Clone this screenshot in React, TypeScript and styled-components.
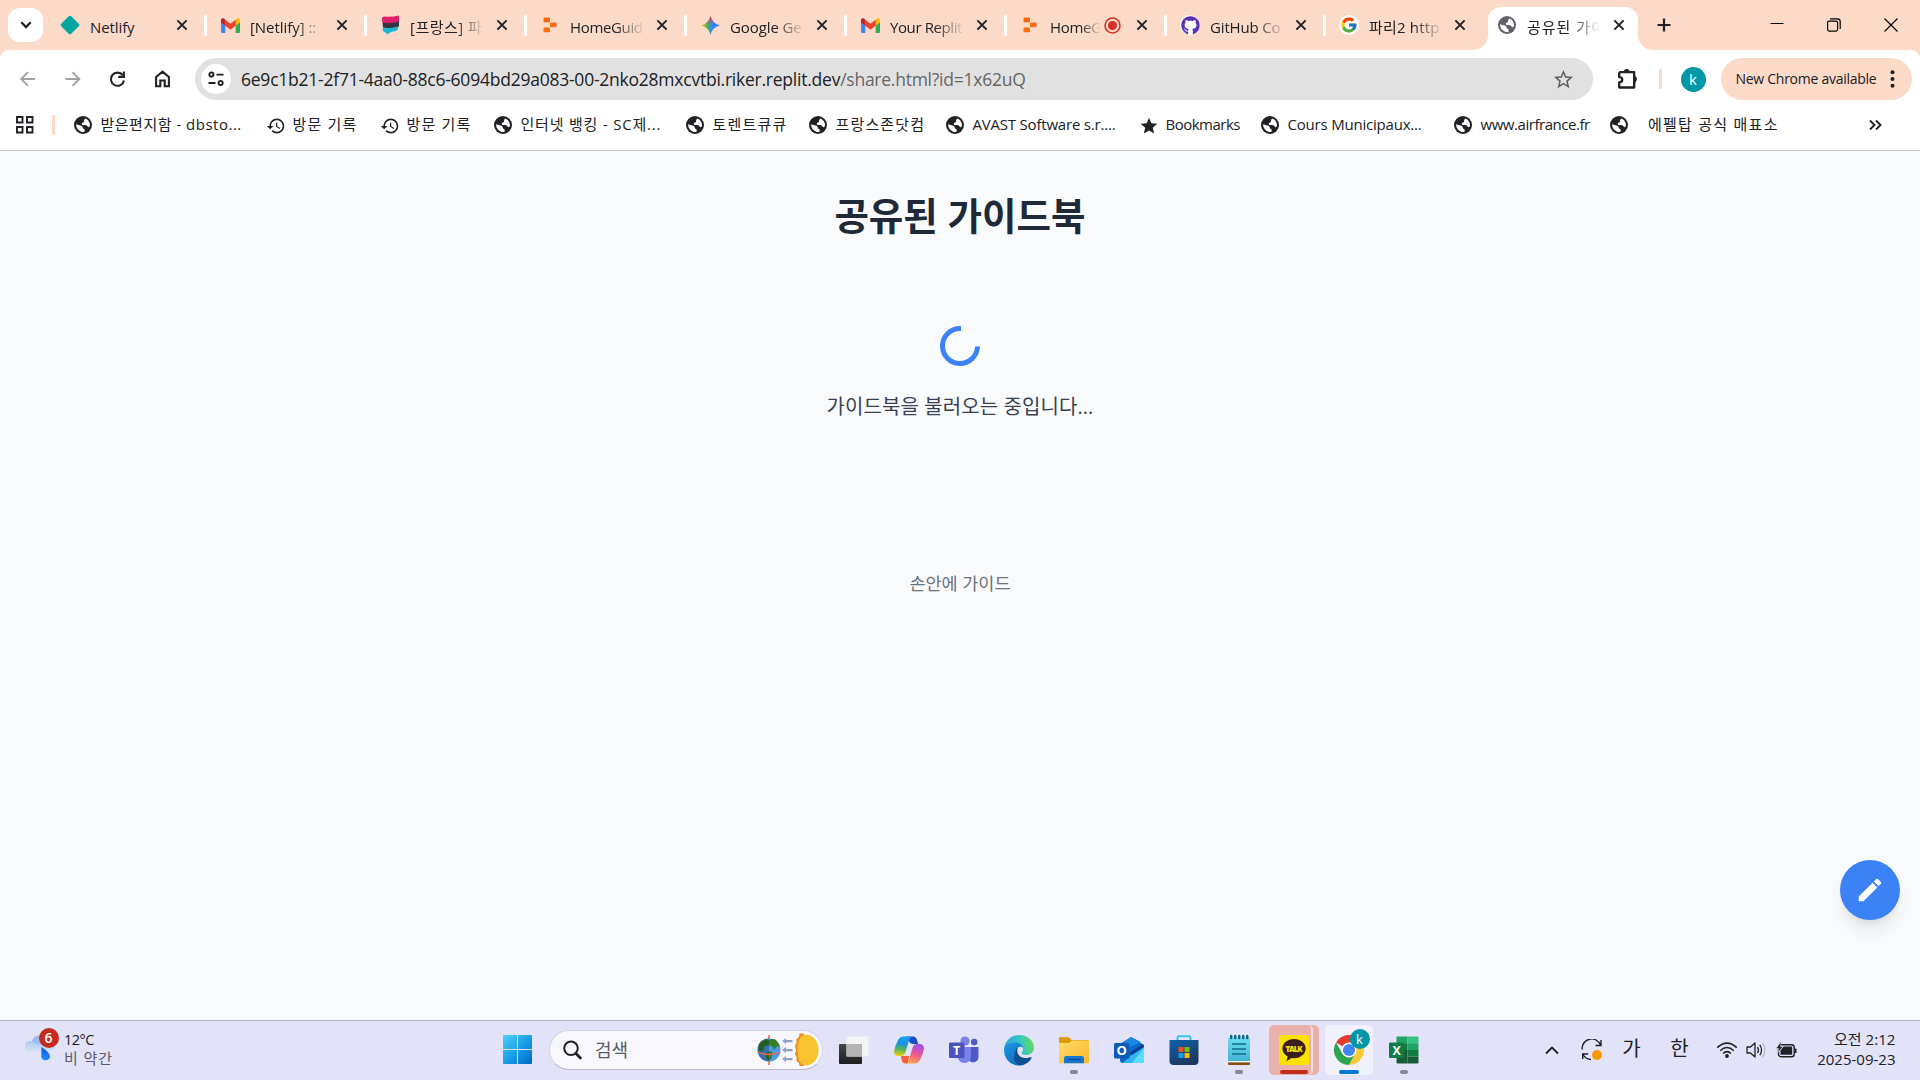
import React from 'react';
import styled, { createGlobalStyle } from 'styled-components';
import { MdHistory, MdStar, MdStarOutline, MdEdit } from 'react-icons/md';
import { FcGoogle } from 'react-icons/fc';
import { FaGithub } from 'react-icons/fa';

const uiFont = `"Open Sans", "Noto Sans CJK KR", sans-serif`;
const ink = '#202124';
const peach = '#fcdac8';

const GlobalStyle = createGlobalStyle`
  * { box-sizing: border-box; }
  body { margin: 0; font-family: ${uiFont}; color: ${ink}; overflow: hidden; }
  svg { display: block; flex: none; }
`;

const Screen = styled.div`
  width: 1920px;
  height: 1080px;
  display: flex;
  flex-direction: column;
  background: #f9fafc;
`;

const Label = styled.span<{ $size?: number; $track?: number; $color?: string; $lh?: number }>`
  font-size: ${(p) => p.$size ?? 15}px;
  letter-spacing: ${(p) => p.$track ?? 0}px;
  color: ${(p) => p.$color ?? ink};
  line-height: ${(p) => p.$lh ?? 20}px;
  white-space: pre;
`;

/* ---------- tab strip ---------- */

const TabStrip = styled.header`
  height: 50px;
  display: flex;
  background: ${peach};
`;

const TabSearch = styled.button`
  width: 35px;
  height: 34px;
  margin: 8px 4px 0 8px;
  padding: 0;
  border: 0;
  border-radius: 12px;
  background: #fff;
  display: grid;
  place-items: center;
  flex: none;
`;

const Tab = styled.div<{ $width: number }>`
  width: ${(p) => p.$width}px;
  height: 50px;
  padding-left: 12px;
  display: flex;
  align-items: center;
  flex: none;
`;

const ActiveTab = styled.div`
  width: 150px;
  height: 43px;
  margin: 7px 0 0 3px;
  padding: 0 0 7px 8px;
  display: flex;
  align-items: center;
  flex: none;
  position: relative;
  background: #fff;
  border-radius: 13px 13px 0 0;
  &::before,
  &::after {
    content: '';
    position: absolute;
    bottom: 0;
    width: 15px;
    height: 15px;
  }
  &::before {
    left: -15px;
    background: radial-gradient(circle at 0 0, ${peach} 14.5px, #fff 15.5px);
  }
  &::after {
    right: -15px;
    background: radial-gradient(circle at 100% 0, ${peach} 14.5px, #fff 15.5px);
  }
`;

const TabIcon = styled.span`
  width: 22px;
  height: 22px;
  display: grid;
  place-items: center;
  flex: none;
`;

const TabTitle = styled.div<{ $width: number; $track: number; $fade: boolean }>`
  width: ${(p) => p.$width}px;
  margin-left: 9px;
  padding-top: 4px;
  overflow: hidden;
  white-space: pre;
  font-size: 15px;
  line-height: 22px;
  letter-spacing: ${(p) => p.$track}px;
  flex: none;
  mask-image: ${(p) => (p.$fade ? 'linear-gradient(90deg, #000 60%, transparent 100%)' : 'none')};
`;

const CloseSlot = styled.span`
  margin-left: auto;
  width: 31px;
  height: 22px;
  display: flex;
  align-items: center;
  justify-content: space-between;
`;

const ActiveClose = styled.span`
  margin-left: auto;
  padding-right: 13px;
`;

const TabDivider = styled.i<{ $on: boolean }>`
  width: 3px;
  height: 21px;
  border-radius: 2px;
  background: ${(p) => (p.$on ? '#fff' : 'transparent')};
`;

const NewTab = styled.span`
  padding: 18px 0 0 19px;
`;

const WindowControls = styled.div`
  margin-left: auto;
  padding: 0 22px 1px 0;
  display: flex;
  align-items: center;
  gap: 43px;
`;

/* ---------- toolbar ---------- */

const ToolbarBack = styled.div`
  background: ${peach};
`;

const Toolbar = styled.div`
  height: 57px;
  padding: 1px 8px 0 17px;
  display: flex;
  align-items: center;
  background: #fff;
  border-radius: 9px 9px 0 0;
`;

const NavButtons = styled.nav`
  width: 178px;
  display: flex;
  gap: 23px;
`;

const Omnibox = styled.div`
  width: 1398px;
  height: 42px;
  padding: 0 18px 0 6px;
  display: flex;
  align-items: center;
  border-radius: 21px;
  background: #e1e1e1;
`;

const SiteInfo = styled.span`
  width: 30px;
  height: 30px;
  margin-right: 10px;
  border-radius: 50%;
  background: #fff;
  display: grid;
  place-items: center;
`;

const BookmarkStar = styled.span`
  margin-left: auto;
`;

const Divider = styled.i<{ $left: number; $right: number }>`
  width: 2.5px;
  height: 20px;
  margin: 0 ${(p) => p.$right}px 0 ${(p) => p.$left}px;
  border-radius: 1px;
  background: ${peach};
  flex: none;
`;

const Extensions = styled.span`
  margin-left: 24px;
`;

const Avatar = styled.span<{ $size: number; $font: number }>`
  width: ${(p) => p.$size}px;
  height: ${(p) => p.$size}px;
  border-radius: 50%;
  background: #0097a7;
  color: #fff;
  font-size: ${(p) => p.$font}px;
  line-height: 1;
  display: grid;
  place-items: center;
  flex: none;
`;

const UpdatePill = styled.button`
  width: 191px;
  height: 42px;
  margin-left: 15px;
  padding: 0 17px 0 15px;
  border: 0;
  border-radius: 21px;
  background: ${peach};
  font-family: inherit;
  display: flex;
  align-items: center;
  justify-content: space-between;
`;

/* ---------- bookmarks ---------- */

const BookmarkBar = styled.div`
  height: 44px;
  padding: 0 38px 8px 16px;
  display: flex;
  align-items: center;
  background: #fff;
  border-bottom: 1px solid #c8c8c8;
`;

const Bookmark = styled.a<{ $width: number; $gap: number }>`
  width: ${(p) => p.$width}px;
  display: flex;
  align-items: center;
  gap: ${(p) => p.$gap}px;
  flex: none;
  ${Label} {
    padding-bottom: 2px;
  }
`;

const BookmarkIcon = styled.span`
  width: 18px;
  height: 18px;
  display: grid;
  place-items: center;
  flex: none;
`;

const Overflow = styled.span`
  margin-left: auto;
`;

/* ---------- page ---------- */

const Page = styled.main`
  flex: 1;
  display: flex;
  flex-direction: column;
  align-items: center;
  background: #f9fafc;
`;

const Heading = styled.h1`
  margin: 40px 0 0;
  font-size: 37.5px;
  line-height: 50px;
  font-weight: 700;
  color: #1f2937;
`;

const Loading = styled.section`
  padding-top: 85px;
  display: flex;
  flex-direction: column;
  align-items: center;
  gap: 26px;
`;

const Footer = styled.footer`
  margin-top: 149px;
`;

const Fab = styled.button`
  width: 60px;
  height: 60px;
  margin: auto 20px 100px auto;
  padding: 0;
  border: 0;
  border-radius: 50%;
  background: #3b82f6;
  color: #fff;
  display: grid;
  place-items: center;
  box-shadow: 0 12px 19px -4px rgba(0, 0, 0, 0.1), 0 5px 8px -5px rgba(0, 0, 0, 0.1);
`;

/* ---------- taskbar ---------- */

const Taskbar = styled.footer`
  height: 60px;
  padding-bottom: 1px;
  display: flex;
  align-items: center;
  background: #e2e3f8;
  border-top: 1px solid #b3b4c5;
`;

const Weather = styled.div`
  width: 490px;
  height: 58px;
  padding-left: 25px;
  display: flex;
  align-items: center;
`;

const WeatherIcon = styled.span`
  position: relative;
  width: 39px;
  height: 36px;
`;

const Count = styled.b`
  position: absolute;
  left: 13.5px;
  top: -4px;
  width: 20px;
  height: 20px;
  border-radius: 50%;
  background: #c42b1c;
  color: #fff;
  font-size: 14px;
  font-weight: 600;
  line-height: 20px;
  text-align: center;
`;

const Stack = styled.div<{ $align: string }>`
  padding-bottom: 2px;
  display: flex;
  flex-direction: column;
  align-items: ${(p) => p.$align};
`;

const Start = styled.span`
  width: 59px;
  padding-left: 13px;
`;

const Search = styled.div`
  width: 274px;
  height: 40px;
  margin-right: 3px;
  padding: 0 2px 0 13px;
  display: flex;
  align-items: center;
  gap: 13px;
  border: 1px solid #d2d2e6;
  border-bottom-color: #babace;
  border-radius: 20px;
  background: #f7f7fd;
`;

const Highlight = styled.span`
  margin-left: auto;
`;

const Slot = styled.div`
  width: 55px;
  display: flex;
  justify-content: center;
`;

const Tile = styled.div<{ $width: number; $bg: string; $stacked?: boolean }>`
  position: relative;
  width: ${(p) => p.$width}px;
  height: 50px;
  padding-top: 9px;
  display: flex;
  flex-direction: column;
  align-items: center;
  gap: 4px;
  border-radius: 5px;
  background: ${(p) => p.$bg};
  &::after {
    content: '';
    display: ${(p) => (p.$stacked ? 'block' : 'none')};
    position: absolute;
    top: 0;
    right: 6px;
    width: 8px;
    height: 50px;
    border-right: 2px solid #f5dfe4;
    border-radius: 0 5px 5px 0;
  }
`;

const Indicator = styled.i<{ $width: number; $color: string }>`
  width: ${(p) => p.$width}px;
  height: 4px;
  border-radius: 2px;
  background: ${(p) => p.$color};
`;

const ProfileBadge = styled.span`
  position: absolute;
  right: 3px;
  top: 4px;
`;

const Tray = styled.div`
  margin-left: auto;
  padding-right: 24.5px;
  display: flex;
  align-items: center;
`;

const TrayItem = styled.span<{ $width: number }>`
  width: ${(p) => p.$width}px;
  flex: none;
`;

/* ---------- drawings ---------- */

const Globe = ({ color = ink }: { color?: string }) => (
  <svg width="18" height="18" viewBox="0 0 18 18">
    <circle cx="9" cy="9" r="9" fill={color} />
    <path d="M2 8.300 6.500 9.600Q8.500 9.800 8.700 11.500T10.600 13.300V15.700Q9 16.300 7.200 15.800 2.300 14 2 8.300z" fill="#fff" />
    <path d="M11.200 2.500Q15.800 4.300 16.100 9.300 15.500 11.700 14 11 13 9 11 9H8.600Q7.300 8.300 8 6.900L10 6Q9.700 3.500 11.200 2.500z" fill="#fff" />
  </svg>
);

const CloseX = () => (
  <svg width="12" height="12" viewBox="0 0 12 12" stroke={ink} strokeWidth="2" fill="none">
    <path d="M1.4 1.4 10.6 10.6M10.6 1.4 1.4 10.6" />
  </svg>
);

const Gmail = () => (
  <svg width="19" height="15" viewBox="0 0 19 15">
    <path d="M0 3h4.3v12H1.3A1.3 1.3 0 0 1 0 13.700z" fill="#4285f4" />
    <path d="M14.700 3H19v10.700a1.300 1.300 0 0 1-1.300 1.300h-3z" fill="#34a853" />
    <path d="M14.700 1.800 16.100.6C17.300-.4 19 .4 19 2v2.500l-4.300 3.300z" fill="#fbbc04" />
    <path d="M4.300 7.800V1.800l5.200 4 5.200-4v6L9.500 11.700z" fill="#ea4335" />
    <path d="M0 2C0 .4 1.700-.4 2.900.6l1.400 1.200v6L0 4.500z" fill="#c5221f" />
  </svg>
);

const Netlify = () => (
  <svg width="20" height="20" viewBox="0 0 20 20">
    <path d="M9 1.100a1.500 1.500 0 0 1 2 0l8 7.900a1.500 1.500 0 0 1 0 2l-8 7.900a1.500 1.500 0 0 1-2 0l-8-7.900a1.500 1.500 0 0 1 0-2z" fill="#05a6a0" />
  </svg>
);

const FlagIcon = () => (
  <svg width="19" height="20" viewBox="0 0 19 20">
    <path d="M1 4Q1 1.500 4 1.600 11 2 18 .5V7Q10 9.500 1.500 8z" fill="#dd1f6c" />
    <path d="M1.500 7.500Q10 9 18 6.500v5Q10 14.500 2 12.500z" fill="#33343f" />
    <path d="M1.500 12.500Q10 14 17.500 11.500L17 14q-1 2-5 2.500-3 .5-6 3-.5-2-2.500-2.500T1.500 12.500z" fill="#1bb5d8" />
  </svg>
);

const Replit = () => (
  <svg width="14" height="16" viewBox="0 0 14 16" fill="#fd6a0a">
    <rect x="0.500" y="0.500" width="6.500" height="4.800" rx="1" />
    <rect x="7" y="5.500" width="6.500" height="4.800" rx="1" />
    <rect x="0.500" y="10.500" width="6.500" height="4.800" rx="1" />
  </svg>
);

const Gemini = () => (
  <svg width="19" height="19" viewBox="0 0 19 19">
    <defs>
      <linearGradient id="gemA" x1="0" y1="0.500" x2="1" y2="0.500">
        <stop offset="0.050" stopColor="#f6c21c" />
        <stop offset="0.350" stopColor="#4aae62" />
        <stop offset="0.600" stopColor="#3186ff" />
      </linearGradient>
      <linearGradient id="gemB" x1="0.500" y1="0" x2="0.500" y2="1">
        <stop offset="0.050" stopColor="#f0454c" />
        <stop offset="0.450" stopColor="#f0454c" stopOpacity="0" />
      </linearGradient>
    </defs>
    <path d="M9.500 0Q11.300 7.700 19 9.500 11.300 11.300 9.500 19 7.700 11.300 0 9.500 7.700 7.700 9.500 0z" fill="url(#gemA)" />
    <path d="M9.500 0Q11.300 7.700 19 9.500 11.300 11.300 9.500 19 7.700 11.300 0 9.500 7.700 7.700 9.500 0z" fill="url(#gemB)" />
  </svg>
);

const Recording = () => (
  <svg width="17" height="17" viewBox="0 0 17 17">
    <circle cx="8.500" cy="8.500" r="7.500" fill="none" stroke="#d93025" strokeWidth="1.600" />
    <circle cx="8.500" cy="8.500" r="4.500" fill="#d93025" />
  </svg>
);

const WhiteDisc = styled.span`
  width: 20px;
  height: 20px;
  border-radius: 50%;
  background: #fff;
  display: grid;
  place-items: center;
`;

const Back = () => (
  <svg width="22" height="22" viewBox="0 0 22 22" fill="none" stroke="#a2a2a2" strokeWidth="1.900">
    <path d="M18 11H4.500M11 4.200 4.200 11l6.800 6.800" />
  </svg>
);
const Forward = () => (
  <svg width="22" height="22" viewBox="0 0 22 22" fill="none" stroke="#a2a2a2" strokeWidth="1.900">
    <path d="M3.500 11H17M10.500 4.200l6.800 6.800-6.800 6.800" />
  </svg>
);
const Reload = () => (
  <svg width="22" height="22" viewBox="0 0 22 22" fill="none" stroke={ink} strokeWidth="2.100">
    <path d="M17 12.500A6.600 6.600 0 1 1 15.800 7.200M16.900 3.500v5.400h-5.600" />
  </svg>
);
const Home = () => (
  <svg width="22" height="22" viewBox="0 0 22 22" fill="none" stroke={ink} strokeWidth="2.100">
    <path d="M4.100 9 10.500 3.700 16.900 9v9.300h-4.200v-5.800H8.300v5.800H4.100z" />
  </svg>
);

const Tune = () => (
  <svg width="18" height="16" viewBox="0 0 18 16" fill="none" stroke={ink} strokeWidth="1.900">
    <circle cx="4.400" cy="3.600" r="2.100" />
    <path d="M9.500 3.600h7M1.500 12h7" />
    <circle cx="13.600" cy="12" r="2.100" />
  </svg>
);

const Puzzle = () => (
  <svg width="22" height="22" viewBox="0 0 22 22">
    <path d="M2.200 4.200h15v5.200M17.200 12.500v7h-15v-5.200q3 0 3-2.600t-3-2.600V4.200" fill="none" stroke={ink} strokeWidth="2.300" strokeLinejoin="round" />
    <path d="M6.800 4a2.900 2.900 0 0 1 5.800 0zM17 8.200a2.900 2.900 0 0 1 0 5.800z" fill={ink} />
    <path d="M17.200 8v7" stroke={ink} strokeWidth="2.300" />
  </svg>
);

const AppsGrid = () => (
  <svg width="18" height="18" viewBox="0 0 18 18" fill="none" stroke={ink} strokeWidth="1.900">
    <path d="M1 1h5.500v5.500H1zM11 1h5.500v5.500H11zM1 11h5.500v5.500H1zM11 11h5.500v5.500H11z" />
  </svg>
);

const Spinner = () => (
  <svg width="40" height="40" viewBox="0 0 40 40" fill="none" stroke="#3b82f6" strokeWidth="5">
    <path d="M21 2.500H20A17.500 17.500 0 1 0 37.500 20.500" />
  </svg>
);

const Cloud = () => (
  <svg width="32" height="32" viewBox="0 0 32 32">
    <defs>
      <linearGradient id="cloudG" x1="0" y1="0" x2="0" y2="1">
        <stop offset="0" stopColor="#8fb4f0" />
        <stop offset="1" stopColor="#bcd4f7" />
      </linearGradient>
      <linearGradient id="cloudF" x1="0" y1="0" x2="0" y2="1">
        <stop offset="0" stopColor="#a9c6f3" />
        <stop offset="1" stopColor="#d6e6fb" />
      </linearGradient>
      <linearGradient id="dropG" x1="0" y1="0" x2="0" y2="1">
        <stop offset="0" stopColor="#1558d6" />
        <stop offset="1" stopColor="#1f8bff" />
      </linearGradient>
    </defs>
    <path d="M6 20a6 6 0 0 1 .5-9.500A8.500 8.500 0 0 1 21 6a7 7 0 0 1 9 8 6 6 0 0 1-5 6z" fill="url(#cloudG)" />
    <path d="M5.500 20A5.500 5.500 0 1 1 9 11q4 3 10 1.500 7-2 11 1.500Q30 20 24.500 20z" fill="url(#cloudF)" />
    <path d="M16.500 15q8.500 5.500 8.500 9.500a4.400 4.400 0 0 1-8.700 0z" fill="url(#dropG)" />
  </svg>
);

const Windows = () => (
  <svg width="30" height="30" viewBox="0 0 30 30">
    <defs>
      <linearGradient id="winG" x1="0" y1="0" x2="1" y2="1">
        <stop offset="0" stopColor="#4ed0fb" />
        <stop offset="0.500" stopColor="#1a9fe8" />
        <stop offset="1" stopColor="#0067c6" />
      </linearGradient>
    </defs>
    <path d="M1 0h13v14H0V1a1 1 0 0 1 1-1zM15 0h13a1 1 0 0 1 1 1v13H15zM0 15h14v14H1a1 1 0 0 1-1-1zM15 15h14v13a1 1 0 0 1-1 1H15z" fill="url(#winG)" />
  </svg>
);

const Magnifier = () => (
  <svg width="19" height="20" viewBox="0 0 19 20" fill="none" stroke={ink}>
    <circle cx="8" cy="8.300" r="6.800" strokeWidth="2" />
    <path d="M12.800 13.200 17.400 18" strokeWidth="2.700" strokeLinecap="round" />
  </svg>
);

const EquinoxArt = () => (
  <svg width="66" height="36" viewBox="0 0 66 36">
    <path d="M15 3v5M15 28v5" stroke="#f4654a" strokeWidth="1.600" />
    <circle cx="15" cy="18" r="11.500" fill="#4b9be8" />
    <path d="M5 12q3-4 7-5l3 2-1 4-4 2v3l-4 2q-2-4-1-8zM15 8q4-2 7 0 3 3 4 7l-3-1-3 4-2-4-4-1zM12 21l4-2 3 2-2 6-3 2-2-4z" fill="#357e21" />
    <path d="M15 6.500a11.500 11.500 0 0 0 0 23z" fill="#0a2233" opacity="0.350" />
    <path d="M3.800 20q11 5 22.400 0" fill="none" stroke="#f4654a" strokeWidth="1.300" />
    <path d="M28 9l4-3v2h6.500v2.300H32V12zM28 18l4-3v2h6.500v2.300H32V21zM28 27l4-3v2h6.500v2.300H32V30z" fill="#8ba4c4" />
    <path d="M50 1.500h-4.500L45 5l-2.500 2v4L41 14l1 4-1 4 1.500 3v4l2.500 2 .500 3H50z" fill="#ef8a1e" />
    <path d="M52 2.500q12 1.500 12.500 15.500Q64 32 52 33.500q-5 0-7-5-3-10 0-20 2-6 7-6z" fill="#f8c32e" />
  </svg>
);

const TaskView = () => (
  <svg width="32" height="32" viewBox="0 0 32 32">
    <defs>
      <linearGradient id="tvG" x1="0" y1="0" x2="0" y2="1">
        <stop offset="0" stopColor="#454545" />
        <stop offset="1" stopColor="#1e1e1e" />
      </linearGradient>
    </defs>
    <rect x="1" y="10" width="23" height="20" rx="1" fill="url(#tvG)" />
    <rect x="8.500" y="2.500" width="22" height="20" rx="1" fill="#f4f4f4" />
    <rect x="8.500" y="10" width="15.500" height="12.500" fill="#b4b4b4" />
  </svg>
);

const Copilot = () => (
  <svg width="32" height="32" viewBox="-1 -2.500 32 32">
    <defs>
      <linearGradient id="cpL" x1="0.400" y1="0" x2="0.300" y2="1">
        <stop offset="0" stopColor="#18a5f2" />
        <stop offset="0.350" stopColor="#1c8fe0" />
        <stop offset="0.650" stopColor="#4fb45c" />
        <stop offset="1" stopColor="#f3d00d" />
      </linearGradient>
      <linearGradient id="cpR" x1="0.700" y1="0" x2="0.400" y2="1">
        <stop offset="0" stopColor="#9a55ee" />
        <stop offset="0.450" stopColor="#e8509c" />
        <stop offset="1" stopColor="#fda04c" />
      </linearGradient>
    </defs>
    <path d="M7 19.500h8l-1 7.500H11.500q-3 0-3.800-3.500z" fill="#f2603b" />
    <path d="M12 0h7q3 0 4 3.500l1.200 4H19q-3 0-4-3z" fill="#1750c4" />
    <path d="M9.500 0H19q-3 .5-4 4l-3.500 11.500Q10.300 19.500 7 19.500H4.500Q0 19.300 0 15 1 9.500 3.800 4 5.600 0 9.500 0z" fill="url(#cpL)" />
    <path d="M20.500 27H11q3-.5 4-4l3.500-11.500Q19.700 7.500 23 7.500h2.500Q30 7.700 30 12q-1 5.500-3.800 11-1.800 4-5.700 4z" fill="url(#cpR)" />
  </svg>
);

const appFont = `"Open Sans", sans-serif`;

const Teams = () => (
  <svg width="32" height="32" viewBox="0 0 32 32">
    <circle cx="17" cy="7" r="4.600" fill="#7b83eb" />
    <circle cx="26.200" cy="8" r="3.200" fill="#5059c9" />
    <path d="M20 13h10.500v9a5.300 5.300 0 0 1-10.500 2z" fill="#5059c9" />
    <path d="M10 13h13v9q0 7-6.500 7T10 22z" fill="#7b83eb" />
    <rect x="1" y="8.500" width="15.500" height="15.500" rx="1.200" fill="#4b53bc" />
    <text x="8.700" y="20.700" fill="#fff" fontSize="12.500" fontWeight="700" fontFamily={appFont} textAnchor="middle">T</text>
  </svg>
);

const Edge = () => (
  <svg width="32" height="32" viewBox="0 0 32 32">
    <defs>
      <linearGradient id="edA" x1="0" y1="0.500" x2="1" y2="0.300">
        <stop offset="0" stopColor="#2aa6dc" />
        <stop offset="0.550" stopColor="#35c5c6" />
        <stop offset="1" stopColor="#69dd4c" />
      </linearGradient>
      <linearGradient id="edB" x1="0" y1="0" x2="1" y2="1">
        <stop offset="0" stopColor="#1b9be6" />
        <stop offset="1" stopColor="#0f57a8" />
      </linearGradient>
    </defs>
    <path d="M1 16A15 15 0 0 1 16 1c9 0 15 6 15 12.500 0 5-4 7.500-8 7.500-3 0-4.500-1-4.500-2 0-.8 1.500-1.500 1.500-3.500 0-3-3-5-7-5-7 0-12 4-12 5.500z" fill="url(#edA)" />
    <path d="M1 16C1 12 6 8.500 12 8.500c4 0 7 2 8 5-3-2-8-.5-8 4.500 0 6 6 9.500 12 8.500l4.500-1.700A15 15 0 0 1 1 16z" fill="url(#edB)" />
    <path d="M12 18c0-3 1.500-4.600 3.500-5-3 4-.500 10.500 6.500 11 3.500.200 6-1.500 6.500-1 .800.700-3.500 8-12.500 8C11 29 9.500 22 12 18z" fill="#124f91" />
  </svg>
);

const Explorer = () => (
  <svg width="32" height="32" viewBox="0 0 32 32">
    <defs>
      <linearGradient id="exG" x1="0" y1="0" x2="1" y2="1">
        <stop offset="0" stopColor="#ffdb6b" />
        <stop offset="1" stopColor="#fcb92a" />
      </linearGradient>
    </defs>
    <path d="M1 4a1 1 0 0 1 1-1h8.500l3 3H30a1 1 0 0 1 1 1v6H1z" fill="#dd9b07" />
    <path d="M1 9h10l3-2.500h16a1 1 0 0 1 1 1V28a1.300 1.300 0 0 1-1.300 1.300H2.300A1.300 1.300 0 0 1 1 28z" fill="url(#exG)" />
    <path d="M6 29.300v-5q0-2.300 2.300-2.300h15.400Q26 22 26 24.300v5z" fill="#1478cf" />
    <path d="M9.500 25.500h13" stroke="#0a4c92" strokeWidth="1.300" />
  </svg>
);

const Outlook = () => (
  <svg width="32" height="32" viewBox="0 0 32 32">
    <path d="M7 12 18 3l13 8v15q0 3-3 3H10q-3 0-3-3z" fill="#1068c4" />
    <path d="M18 3 8 9v8l20-9z" fill="#1b86dc" />
    <path d="M31 12v14q0 3-3 3H10l6-6z" fill="#2fb6f2" />
    <path d="M31 14v12q0 3-3 3h-9z" fill="#5ddcff" />
    <path d="m16 19 14-9 1 3-12 8z" fill="#0c3f94" />
    <rect x="1" y="9" width="15.500" height="15.500" rx="1.500" fill="#0c5cbd" />
    <text x="8.700" y="21.300" fill="#fff" fontSize="13" fontWeight="700" fontFamily={appFont} textAnchor="middle">O</text>
  </svg>
);

const Store = () => (
  <svg width="32" height="32" viewBox="0 0 32 32">
    <defs>
      <linearGradient id="stG" x1="0" y1="0" x2="0.500" y2="1">
        <stop offset="0" stopColor="#0d62ae" />
        <stop offset="1" stopColor="#20375f" />
      </linearGradient>
    </defs>
    <path d="M9.500 8V4Q9.500 2.300 11.200 2.300h9.600q1.700 0 1.700 1.700v4" fill="none" stroke="#36c2f5" strokeWidth="2" />
    <path d="M1.500 6h29v21a4 4 0 0 1-4 4h-21a4 4 0 0 1-4-4z" fill="url(#stG)" />
    <path d="M10.500 13H15.500v5h-5z" fill="#f25022" />
    <path d="M16.500 13h5v5h-5z" fill="#7fba00" />
    <path d="M10.500 19h5v5h-5z" fill="#00a4ef" />
    <path d="M16.500 19h5v5h-5z" fill="#ffb900" />
  </svg>
);

const Notepad = () => (
  <svg width="32" height="32" viewBox="0 0 32 32">
    <defs>
      <linearGradient id="npG" x1="0" y1="0" x2="0" y2="1">
        <stop offset="0" stopColor="#6fdcf0" />
        <stop offset="1" stopColor="#3fb2d4" />
      </linearGradient>
    </defs>
    <rect x="5" y="3.500" width="22" height="25" rx="1.500" fill="url(#npG)" />
    <path d="M5 27h22v1.500H5z" fill="#fff" />
    <path d="M5 28.500h22V30q0 1-1 1H6q-1 0-1-1z" fill="#8a4a12" />
    <path d="M9 10h14M9 15h14M9 20h14" stroke="#0e6b86" strokeWidth="1.700" />
    <path d="M8.200 2v2M12.200 2v2M16.200 2v2M20.200 2v2M24.200 2v2" stroke="#0e6b86" strokeWidth="2.500" strokeLinecap="round" />
  </svg>
);

const KakaoTalk = () => (
  <svg width="32" height="32" viewBox="0 0 32 32">
    <rect x="1" y="1" width="30" height="30" rx="3" fill="#fae100" />
    <path d="M16 5c6.600 0 11.700 4.300 11.700 9.600S22.600 24.300 16 24.300l-2.500-.2-5 3.200 1.100-4.800q-5.200-2.800-5.200-7.900C4.400 9.300 9.400 5 16 5z" fill="#3b1e1e" />
    <text x="16" y="17.800" fill="#fae100" fontSize="7.800" fontWeight="800" fontFamily={appFont} textAnchor="middle" textLength="17">TALK</text>
  </svg>
);

const Chrome = () => (
  <svg width="32" height="32" viewBox="0 0 32 32">
    <path d="M16 16 3 8.500A15 15 0 0 1 29 8.500H16z" fill="#e33b2e" />
    <path d="M3 8.500A15 15 0 0 0 16 31l6.500-11.200L16 16 9.500 19.800z" fill="#2da44e" />
    <path d="M29 8.500A15 15 0 0 1 16 31l6.500-11.200q2-5.300-2.500-11.300z" fill="#fcc934" />
    <circle cx="16" cy="16" r="7.600" fill="#fff" />
    <circle cx="16" cy="16" r="6" fill="#4285f4" />
  </svg>
);

const Excel = () => (
  <svg width="32" height="32" viewBox="0 0 32 32">
    <path d="M8.500 2.500h11v6.700h-11z" fill="#21a366" />
    <path d="M19.500 2.500h9.700q1.300 0 1.300 1.300v5.400h-11z" fill="#33c481" />
    <path d="M8.500 9.200h11v7h-11z" fill="#107c41" />
    <path d="M19.500 9.200h11v7h-11z" fill="#21a366" />
    <path d="M8.500 16h11v13.500H9.800q-1.300 0-1.300-1.300z" fill="#185c37" />
    <path d="M19.500 16h11v6.700h-11z" fill="#107c41" />
    <path d="M19.500 22.700h11v5.500q0 1.300-1.300 1.300h-9.700z" fill="#185c37" />
    <rect x="1" y="8.500" width="15.500" height="15.500" rx="1.200" fill="#107c41" />
    <text x="8.700" y="20.900" fill="#fff" fontSize="12.500" fontWeight="700" fontFamily={appFont} textAnchor="middle">X</text>
  </svg>
);

const Sync = () => (
  <svg width="22" height="22" viewBox="0 0 22 22" fill="none" stroke={ink} strokeWidth="1.400">
    <path d="M1.200 10.500A9.500 9.500 0 0 1 19.500 6M20 1v5.500h-5.500M1.700 20v-5h5.500M2 15.500q3 5 8 5" />
    <circle cx="16" cy="16" r="5" fill="#ff9500" stroke="none" />
  </svg>
);

const Wifi = () => (
  <svg width="22" height="18" viewBox="0 0 22 18" fill="none" stroke={ink} strokeWidth="1.500">
    <path d="M1.200 6.600q9.800-9 19.600 0M4.200 9.700q6.800-6.300 13.600 0M7 12.500q4-3.700 8 0" />
    <circle cx="11" cy="15" r="1.900" fill={ink} stroke="none" />
  </svg>
);

const Speaker = () => (
  <svg width="21" height="18" viewBox="0 0 21 18" fill="none" stroke={ink} strokeWidth="1.300">
    <path d="M1 6h3.500L9 2v14l-4.500-4H1z" strokeLinejoin="round" />
    <path d="M11.500 6q2 3 0 6M13.800 3.800q3.500 5.200 0 10.400" />
    <path d="M16.500 2q5 7 0 14" stroke="#b9bacb" />
  </svg>
);

const Battery = () => (
  <svg width="22" height="18" viewBox="0 0 22 18">
    <rect x="2.500" y="3.700" width="15.700" height="12" rx="2.500" fill="none" stroke={ink} strokeWidth="1.400" />
    <path d="M4.500 13.800V9.500L7.500 5.600h8.700v8.200z" fill={ink} />
    <path d="M18.700 7.500h1.800v4.500h-1.800z" fill={ink} />
    <path d="M5.500 0 0 7.500h2.800L1.500 12 7 5.500H4.500z" fill={ink} stroke="#e2e3f8" strokeWidth="0.600" />
  </svg>
);

/* ---------- data ---------- */

type TabInfo = { title: string; icon: React.ReactNode; track: number; width?: number; short?: boolean };

const tabs: TabInfo[] = [
  { title: 'Netlify', icon: <Netlify />, track: -0.1 },
  { title: '[Netlify] ::', icon: <Gmail />, track: -0.05 },
  { title: '[프랑스] 파', icon: <FlagIcon />, track: 0.5 },
  { title: 'HomeGuid', icon: <Replit />, track: -0.35 },
  { title: 'Google Ge', icon: <Gemini />, track: -0.1 },
  { title: 'Your Replit', icon: <Gmail />, track: -0.4 },
  { title: 'HomeG', icon: <Replit />, track: -0.35, short: true },
  { title: 'GitHub Co', icon: <WhiteDisc><FaGithub size={19} color="#5a32b4" /></WhiteDisc>, track: -0.15, width: 159 },
  { title: '파리2 http', icon: <WhiteDisc><FcGoogle size={18} /></WhiteDisc>, track: 0.2, width: 159 },
];

type Mark = { text: string; kind: 'globe' | 'history' | 'star'; width: number; track: number; gap?: number };

const marks: Mark[] = [
  { text: '받은편지함 - dbsto...', kind: 'globe', width: 192, track: 0.5 },
  { text: '방문 기록', kind: 'history', width: 114, track: 1.15 },
  { text: '방문 기록', kind: 'history', width: 114, track: 1.15 },
  { text: '인터넷 뱅킹 - SC제...', kind: 'globe', width: 192, track: 0.8 },
  { text: '토렌트큐큐', kind: 'globe', width: 123, track: 1.2 },
  { text: '프랑스존닷컴', kind: 'globe', width: 137, track: 1.15 },
  { text: 'AVAST Software s.r....', kind: 'globe', width: 193, track: -0.2 },
  { text: 'Bookmarks', kind: 'star', width: 122, track: -0.5 },
  { text: 'Cours Municipaux...', kind: 'globe', width: 193, track: -0.2 },
  { text: 'www.airfrance.fr', kind: 'globe', width: 156, track: -0.45 },
  { text: '에펠탑 공식 매표소', kind: 'globe', width: 180, track: 1.25, gap: 20.5 },
];

const markIcon = {
  globe: <Globe />,
  history: <MdHistory size={20} />,
  star: <MdStar size={20} />,
};

type AppInfo = { icon: React.ReactNode; dot?: [number, string]; tile?: [number, string]; stacked?: boolean; badge?: boolean };

const apps: AppInfo[] = [
  { icon: <TaskView /> },
  { icon: <Copilot /> },
  { icon: <Teams /> },
  { icon: <Edge /> },
  { icon: <Explorer />, dot: [8, '#85868f'] },
  { icon: <Outlook /> },
  { icon: <Store /> },
  { icon: <Notepad />, dot: [8, '#85868f'] },
  { icon: <KakaoTalk />, dot: [28, '#c42b1c'], tile: [50, '#e9b0ac'], stacked: true },
  { icon: <Chrome />, dot: [20, '#0078d4'], tile: [48, '#f1f1fc'], badge: true },
  { icon: <Excel />, dot: [8, '#85868f'] },
];

export default function App() {
  return (
    <Screen>
      <GlobalStyle />
      <TabStrip>
        <TabSearch>
          <svg width="12" height="8" viewBox="0 0 12 8" fill="none" stroke={ink} strokeWidth="2.300">
            <path d="M1.300 1.300 6 6l4.700-4.700" />
          </svg>
        </TabSearch>
        {tabs.map((t, i) => (
          <Tab key={i} $width={t.width ?? 160}>
            <TabIcon>{t.icon}</TabIcon>
            <TabTitle $width={t.short ? 51 : 75} $track={t.track} $fade={i > 0}>{t.title}</TabTitle>
            {t.short && <TabIcon><Recording /></TabIcon>}
            <CloseSlot>
              <CloseX />
              <TabDivider $on={i < 8} />
            </CloseSlot>
          </Tab>
        ))}
        <ActiveTab>
          <TabIcon><Globe color="#5f6368" /></TabIcon>
          <TabTitle $width={73} $track={1} $fade>공유된 가이</TabTitle>
          <ActiveClose><CloseX /></ActiveClose>
        </ActiveTab>
        <NewTab>
          <svg width="14" height="14" viewBox="0 0 14 14" stroke={ink} strokeWidth="2.200">
            <path d="M7 .5v13M.5 7h13" />
          </svg>
        </NewTab>
        <WindowControls>
          <svg width="14" height="14" viewBox="0 0 14 14" stroke="#000"><path d="M.5 5.500h13" /></svg>
          <svg width="14" height="14" viewBox="0 0 14 14" fill="none" stroke="#000" strokeWidth="1.200">
            <rect x=".6" y="3.100" width="10" height="10" rx="1.500" />
            <path d="M3 .8h7.500q2.700 0 2.700 2.700V11" />
          </svg>
          <svg width="14" height="14" viewBox="0 0 14 14" stroke="#000" strokeWidth="1.100"><path d="m.5.5 13 13M13.500.5l-13 13" /></svg>
        </WindowControls>
      </TabStrip>

      <ToolbarBack>
        <Toolbar>
          <NavButtons>
            <Back /><Forward /><Reload /><Home />
          </NavButtons>
          <Omnibox>
            <SiteInfo><Tune /></SiteInfo>
            <Label $size={17.5} $track={-0.235} $lh={26}>6e9c1b21-2f71-4aa0-88c6-6094bd29a083-00-2nko28mxcvtbi.riker.replit.dev</Label>
            <Label $size={17.5} $track={-0.25} $lh={26} $color="#666">/share.html?id=1x62uQ</Label>
            <BookmarkStar><MdStarOutline size={23} color="#5f6063" /></BookmarkStar>
          </Omnibox>
          <Extensions><Puzzle /></Extensions>
          <Divider $left={20} $right={19} />
          <Avatar $size={25} $font={15}>k</Avatar>
          <UpdatePill>
            <Label $size={14} $track={-0.27}>New Chrome available</Label>
            <svg width="5" height="18" viewBox="0 0 5 18" fill={ink}>
              <circle cx="2.500" cy="2.200" r="2" /><circle cx="2.500" cy="9" r="2" /><circle cx="2.500" cy="15.800" r="2" />
            </svg>
          </UpdatePill>
        </Toolbar>
      </ToolbarBack>

      <BookmarkBar>
        <AppsGrid />
        <Divider $left={18} $right={19} />
        {marks.map((m, i) => (
          <Bookmark key={i} $width={m.width} $gap={m.gap ?? 9}>
            <BookmarkIcon>{markIcon[m.kind]}</BookmarkIcon>
            <Label $track={m.track}>{m.text}</Label>
          </Bookmark>
        ))}
        <Overflow>
          <svg width="13" height="12" viewBox="0 0 13 12" fill="none" stroke={ink} strokeWidth="1.900">
            <path d="m1 1.500 4.500 4.500L1 10.500M7 1.500 11.500 6 7 10.500" />
          </svg>
        </Overflow>
      </BookmarkBar>

      <Page>
        <Heading>공유된 가이드북</Heading>
        <Loading>
          <Spinner />
          <Label $size={20} $track={0.08} $lh={30} $color="#374151">가이드북을 불러오는 중입니다...</Label>
        </Loading>
        <Footer><Label $size={17.5} $lh={25} $color="#6b7280">손안에 가이드</Label></Footer>
        <Fab><MdEdit size={30} /></Fab>
      </Page>

      <Taskbar>
        <Weather>
          <WeatherIcon><Cloud /><Count>6</Count></WeatherIcon>
          <Stack $align="flex-start">
            <Label $size={14.5} $track={-0.5} $lh={19}>12°C</Label>
            <Label $track={0.9} $lh={19} $color="#5c5d69">비 약간</Label>
          </Stack>
        </Weather>
        <Start><Windows /></Start>
        <Search>
          <Magnifier />
          <Label $size={18} $lh={24} $color="#5b5b64">검색</Label>
          <Highlight><EquinoxArt /></Highlight>
        </Search>
        {apps.map((a, i) => (
          <Slot key={i}>
            <Tile $width={a.tile?.[0] ?? 48} $bg={a.tile?.[1] ?? 'transparent'} $stacked={a.stacked}>
              {a.icon}
              {a.dot && <Indicator $width={a.dot[0]} $color={a.dot[1]} />}
              {a.badge && <ProfileBadge><Avatar $size={20} $font={13}>k</Avatar></ProfileBadge>}
            </Tile>
          </Slot>
        ))}
        <Tray>
          <TrayItem $width={36}>
            <svg width="14" height="9" viewBox="0 0 14 9" fill="none" stroke={ink} strokeWidth="1.900"><path d="m1 7.500 6-6 6 6" /></svg>
          </TrayItem>
          <TrayItem $width={41}><Sync /></TrayItem>
          <TrayItem $width={48}><Label $size={20}>가</Label></TrayItem>
          <TrayItem $width={46}><Label $size={20}>한</Label></TrayItem>
          <TrayItem $width={30}><Wifi /></TrayItem>
          <TrayItem $width={30}><Speaker /></TrayItem>
          <TrayItem $width={41}><Battery /></TrayItem>
          <Stack $align="flex-end">
            <Label $lh={20} $track={0.05}>오전 2:12</Label>
            <Label $lh={20} $track={0}>2025-09-23</Label>
          </Stack>
        </Tray>
      </Taskbar>
    </Screen>
  );
}
